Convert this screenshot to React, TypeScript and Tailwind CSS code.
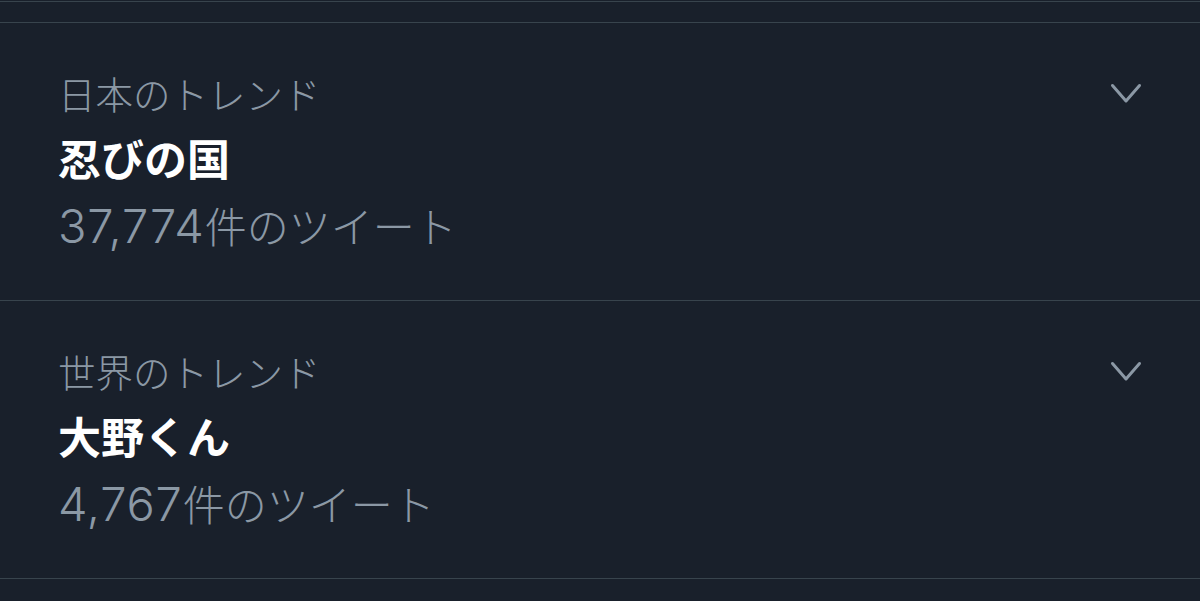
import React from "react";

const Chevron = () => (
  <svg width="34" height="24" viewBox="0 0 34 24" fill="none" className="shrink-0">
    <path d="M3.5 4.5 L17 20 L30.5 4.5" stroke="#8b98a5" strokeWidth="3" strokeLinecap="round" strokeLinejoin="round" />
  </svg>
);

const Trend = ({ label, title, num, rest }: { label: string; title: string; num: string; rest: string }) => (
  <div className="pt-[38px] pb-[37px] pl-[58px] pr-[57px] border-b border-[#38444d]">
    <div className="flex items-center justify-between h-[64px]">
      <div className="text-[37.5px] leading-[64px] text-[#8b98a5] font-light">{label}</div>
      <Chevron />
    </div>
    <div className="h-[64px] text-[43px] leading-[64px] font-bold text-white">{title}</div>
    <div className="h-[74px] text-[42px] leading-[72px] text-[#8b98a5] font-light">
      <span className="text-[47px] font-light tracking-[0.8px]" style={{ fontFamily: '"Inter", "Noto Sans CJK JP", sans-serif' }}>
        {num}
      </span>
      <span>{rest}</span>
    </div>
  </div>
);

export default function App() {
  return (
    <div
      className="w-[1200px] h-[601px] bg-[#19202b] overflow-hidden"
      style={{ fontFamily: '"Noto Sans CJK JP", "Noto Sans", sans-serif' }}
    >
      <div className="mt-[1px] h-[22px] border-y border-[#38444d]" />
      <Trend label="日本のトレンド" title="忍びの国" num="37,774" rest="件のツイート" />
      <Trend label="世界のトレンド" title="大野くん" num="4,767" rest="件のツイート" />
    </div>
  );
}
